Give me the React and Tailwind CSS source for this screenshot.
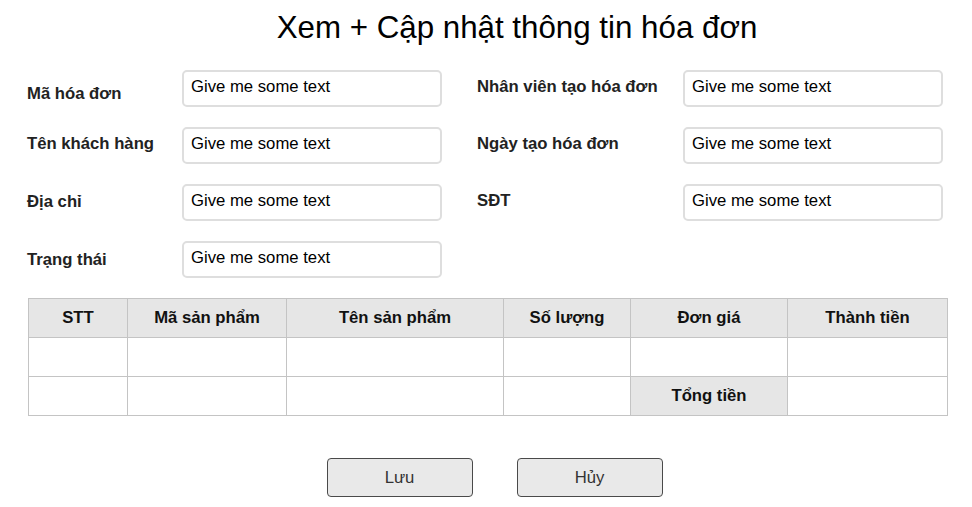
import React from 'react';

const leftFields = [
  { label: 'Mã hóa đơn', offset: 'mt-[15px]' },
  { label: 'Tên khách hàng', offset: 'mt-[8px]' },
  { label: 'Địa chỉ', offset: 'mt-[9px]' },
  { label: 'Trạng thái', offset: 'mt-[10px]' },
];

const rightFields = [
  { label: 'Nhân viên tạo hóa đơn', offset: 'mt-[8px]' },
  { label: 'Ngày tạo hóa đơn', offset: 'mt-[8px]' },
  { label: 'SĐT', offset: 'mt-[8px]' },
];

const columns = [
  { label: 'STT', width: 'w-[99px]' },
  { label: 'Mã sản phẩm', width: 'w-[159px]' },
  { label: 'Tên sản phẩm', width: 'w-[217px]' },
  { label: 'Số lượng', width: 'w-[127px]' },
  { label: 'Đơn giá', width: 'w-[157px]' },
  { label: 'Thành tiền', width: 'w-[160px]' },
];

function TextBox() {
  return (
    <div className="w-[260px] h-[37px] border-2 border-[#dedede] rounded-[5px] pl-[7px] pt-[6px] text-[16.7px] leading-[18px] text-black">
      Give me some text
    </div>
  );
}

function Field({ label, offset, labelWidth }) {
  return (
    <div className="flex items-start h-[37px]">
      <div className={`${labelWidth} ${offset} text-[16.7px] leading-[18px] font-bold text-[#222]`}>{label}</div>
      <TextBox />
    </div>
  );
}

export default function App() {
  return (
    <div className="w-[972px] h-[507px] bg-white font-['Liberation_Sans',Arial,sans-serif] text-black">
      {/* Title */}
      <div className="flex justify-center pl-[62px] pt-[10px]">
        <h1 className="text-[31.3px] leading-[36px] font-normal">Xem + Cập nhật thông tin hóa đơn</h1>
      </div>

      {/* Form */}
      <div className="flex pl-[27px] mt-[24px]">
        <div className="flex flex-col gap-[20px]">
          {leftFields.map((f) => (
            <Field key={f.label} label={f.label} offset={f.offset} labelWidth="w-[155px]" />
          ))}
        </div>
        <div className="flex flex-col gap-[20px] ml-[35px]">
          {rightFields.map((f) => (
            <Field key={f.label} label={f.label} offset={f.offset} labelWidth="w-[206px]" />
          ))}
        </div>
      </div>

      {/* Table */}
      <div className="pl-[28px] mt-[20px]">
        <table className="w-[919px] table-fixed border-collapse text-[16.7px]">
          <thead>
            <tr className="h-[39px]">
              {columns.map((c) => (
                <th key={c.label} className={`${c.width} bg-[#e6e6e6] border border-[#c4c4c4] font-bold text-center text-[#111]`}>
                  {c.label}
                </th>
              ))}
            </tr>
          </thead>
          <tbody>
            <tr className="h-[39px]">
              {columns.map((c) => (
                <td key={c.label} className="border border-[#c4c4c4]"></td>
              ))}
            </tr>
            <tr className="h-[39px]">
              <td className="border border-[#c4c4c4]"></td>
              <td className="border border-[#c4c4c4]"></td>
              <td className="border border-[#c4c4c4]"></td>
              <td className="border border-[#c4c4c4]"></td>
              <td className="border border-[#c4c4c4] bg-[#e6e6e6] font-bold text-center text-[#111]">Tổng tiền</td>
              <td className="border border-[#c4c4c4]"></td>
            </tr>
          </tbody>
        </table>
      </div>

      {/* Actions */}
      <div className="flex justify-center gap-[44px] pl-[17px] mt-[42px]">
        <button className="w-[146px] h-[39px] bg-[#e9e9e9] border border-[#4a4a4a] rounded-[4px] text-[16.7px] text-[#333]">
          Lưu
        </button>
        <button className="w-[146px] h-[39px] bg-[#e9e9e9] border border-[#4a4a4a] rounded-[4px] text-[16.7px] text-[#333]">
          Hủy
        </button>
      </div>
    </div>
  );
}
